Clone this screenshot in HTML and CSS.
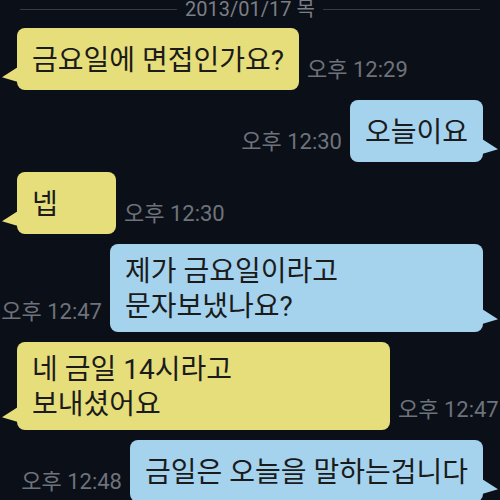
FILE: index.html
```html
<!DOCTYPE html>
<html lang="ko">
<head>
<meta charset="UTF-8">
<title>채팅</title>
<link rel="stylesheet" href="styles.css">
</head>
<body>

<div class="chat">
  <div class="date">
    <span class="date-line"></span>
    <span class="date-text">2013/01/17 목</span>
    <span class="date-line"></span>
  </div>

  <div class="row left">
    <div class="bubble yellow">금요일에 면접인가요?</div>
    <span class="time">오후 12:29</span>
  </div>

  <div class="row right">
    <span class="time">오후 12:30</span>
    <div class="bubble blue">오늘이요</div>
  </div>

  <div class="row left">
    <div class="bubble yellow">넵</div>
    <span class="time">오후 12:30</span>
  </div>

  <div class="row right">
    <span class="time">오후 12:47</span>
    <div class="bubble blue wide">제가 금요일이라고<br>문자보냈나요?</div>
  </div>

  <div class="row left">
    <div class="bubble yellow wide">네 금일 14시라고<br>보내셨어요</div>
    <span class="time">오후 12:47</span>
  </div>

  <div class="row right">
    <span class="time">오후 12:48</span>
    <div class="bubble blue">금일은 오늘을 말하는겁니다</div>
  </div>
</div>

</body>
</html>
```

FILE: styles.css
```css
body {
  margin: 0;
  background: #0b0f17;
  font-family: Roboto, "Noto Sans CJK KR", sans-serif;
  height: 500px;
  overflow: hidden;
}

.chat {
  display: flex;
  flex-direction: column;
  gap: 10px;
  padding: 0 17px;
}

.date {
  display: flex;
  align-items: center;
  gap: 8px;
  height: 18px;
  margin: 0 3px;
}

.date-line {
  flex: 1;
  height: 1px;
  background: #353a43;
}

.date-text {
  color: #7a7e86;
  font-size: 20px;
  line-height: 18px;
}

.row {
  display: flex;
  align-items: flex-end;
  gap: 8px;
}

.row.right {
  justify-content: flex-end;
}

.bubble {
  position: relative;
  display: flex;
  align-items: center;
  flex-shrink: 0;
  box-sizing: border-box;
  min-width: 99px;
  min-height: 62px;
  padding: 10px 15px 8px 15px;
  border-radius: 8px;
  font-size: 28px;
  line-height: 35px;
  color: #1b1b1b;
}

.bubble.wide {
  width: 373px;
}

.yellow {
  background: #e6de7a;
}

.blue {
  background: #a5d3ee;
}

.bubble::before {
  content: "";
  position: absolute;
  bottom: 8px;
  width: 16px;
  height: 15px;
  background: inherit;
}

.yellow::before {
  left: -15px;
  clip-path: polygon(100% 0, 0 68%, 100% 100%);
}

.blue::before {
  right: -15px;
  clip-path: polygon(0 0, 100% 68%, 0 100%);
}

.time {
  flex-shrink: 0;
  color: #6e737b;
  font-size: 22px;
  line-height: 24px;
  padding-bottom: 8px;
  white-space: nowrap;
}
```
